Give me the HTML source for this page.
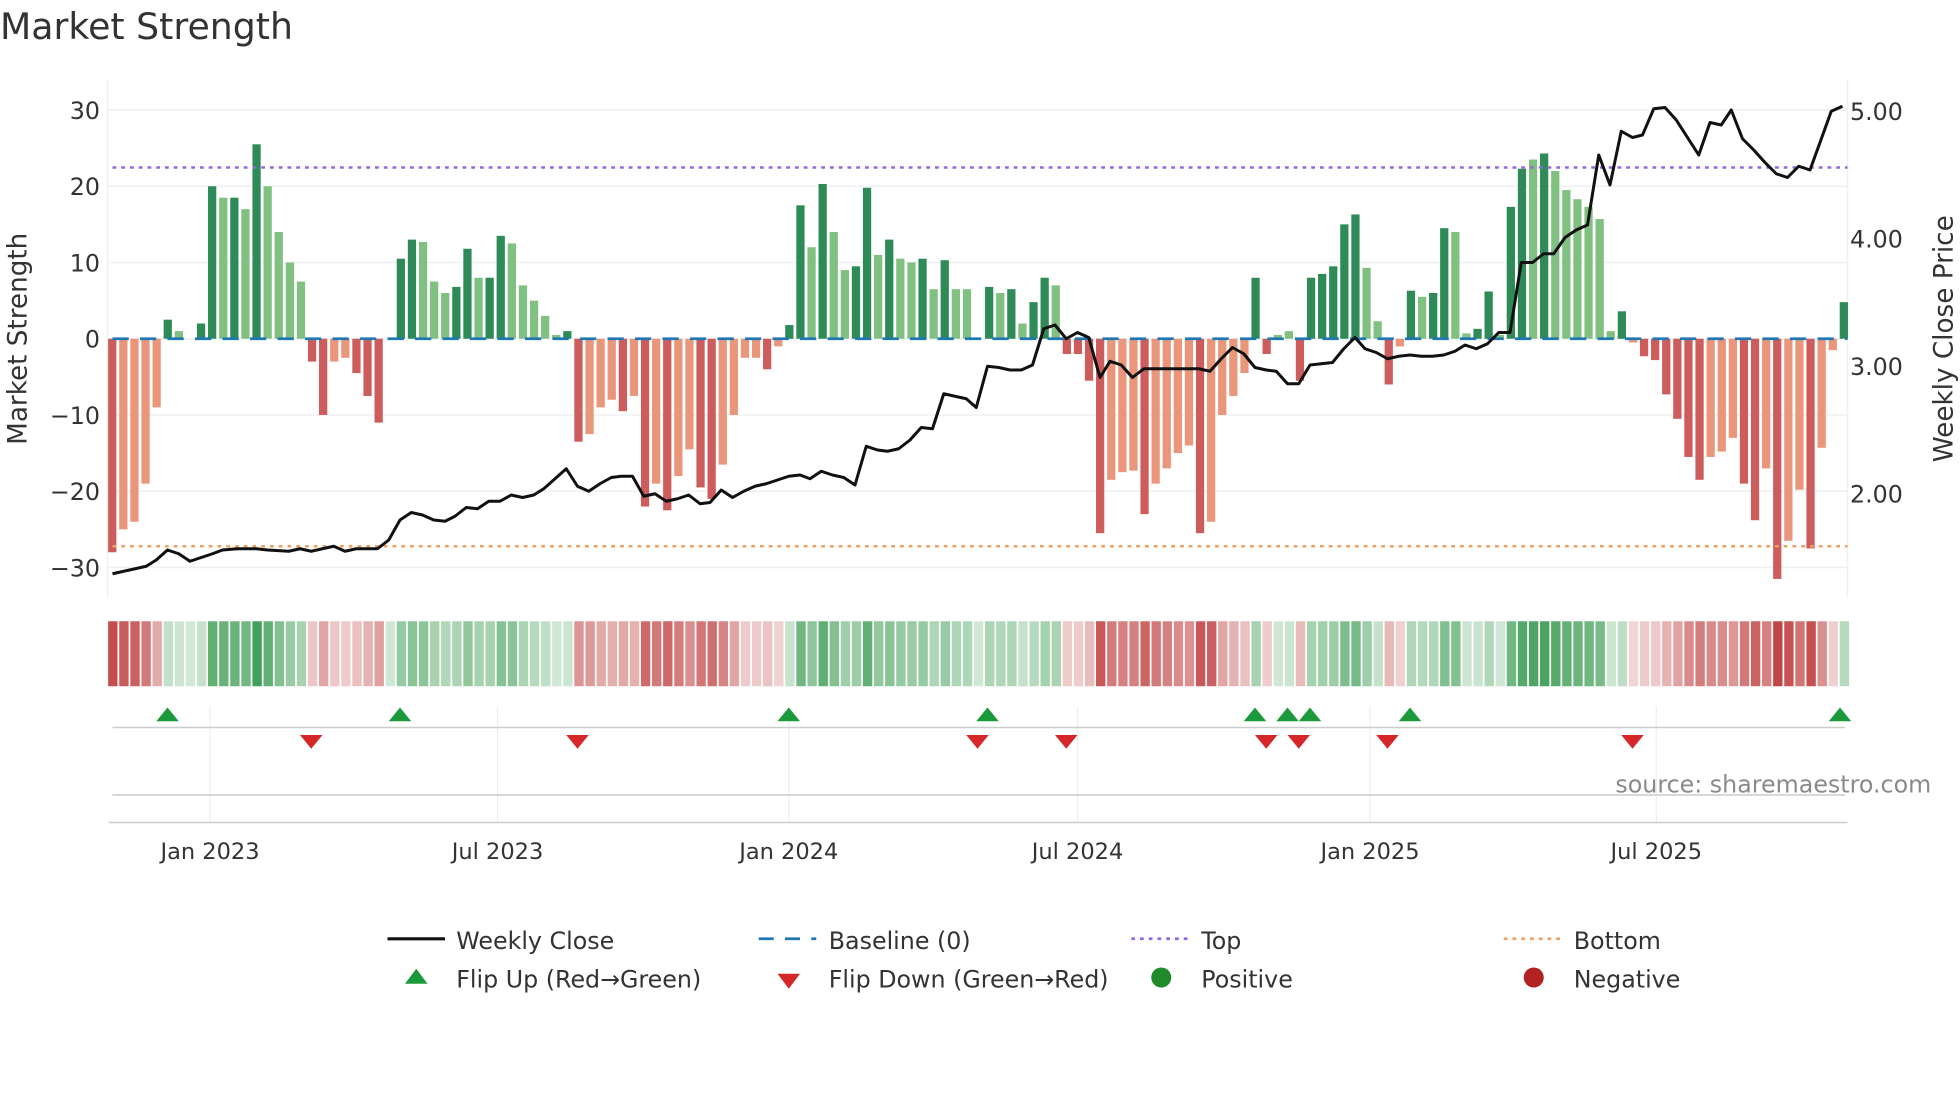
<!DOCTYPE html>
<html><head><meta charset="utf-8"><style>
html,body{margin:0;padding:0;background:#fff;}
svg{display:block;font-family:"DejaVu Sans","Liberation Sans",sans-serif;}
</style></head><body>
<svg id="s" width="1960" height="1102" viewBox="0 0 1568 881.6" xmlns="http://www.w3.org/2000/svg">
<rect width="1568" height="882" fill="#fff"/>
<text x="0" y="31" font-size="29" fill="#333">Market Strength</text>
<g id="grid"></g>
<g id="bars"></g>
<g id="strip"></g>
<g id="marks"></g>
<text transform="translate(21,271) rotate(-90)" text-anchor="middle" font-size="21" fill="#333">Market Strength</text>
<text transform="translate(1562,271) rotate(-90)" text-anchor="middle" font-size="21" fill="#333">Weekly Close Price</text>
<text x="1545" y="634" text-anchor="end" font-size="19" fill="#8a8a8a">source: sharemaestro.com</text>
<g font-size="18" fill="#333">
<text x="168" y="687" text-anchor="middle">Jan 2023</text>
<text x="398" y="687" text-anchor="middle">Jul 2023</text>
<text x="631" y="687" text-anchor="middle">Jan 2024</text>
<text x="862" y="687" text-anchor="middle">Jul 2024</text>
<text x="1096" y="687" text-anchor="middle">Jan 2025</text>
<text x="1325" y="687" text-anchor="middle">Jul 2025</text>
</g>
<g font-size="19" fill="#333">
<line x1="310" y1="751" x2="356" y2="751" stroke="#111" stroke-width="2.5"/>
<text x="365" y="759">Weekly Close</text>
<line x1="607" y1="751" x2="653" y2="751" stroke="#1f77b4" stroke-width="2.2" stroke-dasharray="12,9"/>
<text x="663" y="759">Baseline (0)</text>
<line x1="905" y1="751" x2="951" y2="751" stroke="#9467dd" stroke-width="2.2" stroke-dasharray="3,4"/>
<text x="961" y="759">Top</text>
<line x1="1203" y1="751" x2="1249" y2="751" stroke="#f0a060" stroke-width="2.2" stroke-dasharray="3,4"/>
<text x="1259" y="759">Bottom</text>
<polygon points="324,787 342,787 333,775" fill="#1a9a3a"/>
<text x="365" y="790">Flip Up (Red→Green)</text>
<polygon points="622,779 640,779 631,791" fill="#d62728"/>
<text x="663" y="790">Flip Down (Green→Red)</text>
<circle cx="929" cy="782" r="8" fill="#1e8a2a"/>
<text x="961" y="790">Positive</text>
<circle cx="1227" cy="782" r="8" fill="#b22222"/>
<text x="1259" y="790">Negative</text>
</g>
</svg>
<script>
var NS="http://www.w3.org/2000/svg";
function el(p,t,a){var e=document.createElementNS(NS,t);for(var k in a)e.setAttribute(k,a[k]);p.appendChild(e);return e;}
var g=document.getElementById('grid');
[30,20,10,0,-10,-20,-30].forEach(function(v){var y=271-v*6.1;
 el(g,'line',{x1:87,x2:1478,y1:y,y2:y,stroke:'#eef0f2','stroke-width':1.2});
 var t=el(g,'text',{x:80,y:y+7,'text-anchor':'end','font-size':19,fill:'#333'});t.textContent=(v<0?'\u2212'+(-v):v);
});
[[5,89],[4,191],[3,293],[2,395]].forEach(function(p){var t=el(g,'text',{x:1480,y:p[1]+7,'font-size':19,fill:'#333'});t.textContent=p[0].toFixed(2);});
el(g,'line',{x1:86,x2:86,y1:64,y2:478,stroke:'#eef0f2','stroke-width':1.2});
el(g,'line',{x1:1478,x2:1478,y1:64,y2:478,stroke:'#eef0f2','stroke-width':1.2});
[168,398,631,862,1096,1325].forEach(function(x){el(g,'line',{x1:x,x2:x,y1:565,y2:658,stroke:'#eceef0','stroke-width':1});});
el(g,'line',{x1:90,x2:1476,y1:582,y2:582,stroke:'#ccc','stroke-width':1.2});
el(g,'line',{x1:90,x2:1476,y1:636,y2:636,stroke:'#ccc','stroke-width':1.2});
el(g,'line',{x1:87,x2:1478,y1:658,y2:658,stroke:'#ccc','stroke-width':1.2});
var d=[[-28,1],[-25,0],[-24,0],[-19,0],[-9,0],[2.5,1],[1,0],[0,0],[2,1],[20,1],[18.5,0],[18.5,1],[17,0],[25.5,1],[20,0],[14,0],[10,0],[7.5,0],[-3,1],[-10,1],[-3,0],[-2.5,0],[-4.5,1],[-7.5,1],[-11,1],[0,0],
[10.5,1],[13,1],[12.7,0],[7.5,0],[6,0],[6.8,1],[11.8,1],[8,0],[8,1],[13.5,1],[12.5,0],[7,0],[5,0],[3,0],[0.5,0],[1,1],[-13.5,1],[-12.5,0],[-9,0],[-8,0],[-9.5,1],[-7.5,0],[-22,1],[-19,0],[-22.5,1],[-18,0],[-14.5,0],[-19.5,1],[-21,1],[-16.5,0],[-10,0],[-2.5,0],[-2.5,0],[-4,1],[-1,0],
[1.8,1],[17.5,1],[12,0],[20.3,1],[14,0],[9,0],[9.5,1],[19.8,1],[11,0],[13,1],[10.5,0],[10,0],[10.5,1],[6.5,0],[10.3,1],[6.5,0],[6.5,0],[0,0],[6.8,1],[6,0],[6.5,1],[2,0],[4.8,1],[8,1],[7,0],[-2,1],[-2,1],[-5.5,1],[-25.5,1],[-18.5,0],[-17.5,0],[-17.3,0],[-23,1],[-19,0],[-17,0],[-15,0],[-14,0],[-25.5,1],[-24,0],[-10,0],[-7.5,0],[-4.5,0],
[8,1],[-2,1],[0.5,0],[1,0],[-5.5,1],[8,1],[8.5,1],[9.5,1],[15,1],[16.3,1],[9.3,0],[2.3,0],[-6,1],[-1,0],[6.3,1],[5.5,0],[6,1],[14.5,1],[14,0],[0.7,0],[1.3,1],[6.2,1],[0.5,0],[17.3,1],[22.3,1],[23.5,0],[24.3,1],[22,0],[19.5,0],[18.3,0],[17.3,0],[15.7,0],[1,0],[3.6,1],[-0.5,0],
[-2.3,1],[-2.8,1],[-7.3,1],[-10.5,1],[-15.5,1],[-18.5,1],[-15.5,0],[-14.8,0],[-13,0],[-19,1],[-23.8,1],[-17,0],[-31.5,1],[-26.5,0],[-19.8,0],[-27.5,1],[-14.3,0],[-1.5,0],[4.8,1]];
var b=document.getElementById('bars'),st=document.getElementById('strip');
var W=8.88;
d.forEach(function(p,i){var x=86.5+i*W,v=p[0],h=Math.abs(v)*6.1;
 var c=v>=0?(p[1]?'#2e8b57':'#80c080'):(p[1]?'#cd5c5c':'#e9967a');
 if(h>0.3)el(b,'rect',{x:x,y:v>=0?271-h:271,width:6.6,height:h,fill:c});
 var a=Math.min(1,0.22+Math.abs(v)/30*0.8);
 var sc=v>=0?'rgba(46,150,70,'+a+')':'rgba(195,70,70,'+a+')';
 el(st,'rect',{x:x,y:497,width:7.5,height:52,fill:sc});
});
el(b,'line',{x1:90,x2:1478,y1:271,y2:271,stroke:'#1f77b4','stroke-width':2.2,'stroke-dasharray':'13,9'});
el(b,'line',{x1:90,x2:1478,y1:134,y2:134,stroke:'#9467dd','stroke-width':2,'stroke-dasharray':'3,4'});
el(b,'line',{x1:90,x2:1478,y1:437,y2:437,stroke:'#f0a060','stroke-width':2,'stroke-dasharray':'3,4'});
var pts="90,459 117,453 125,448 134,440 143,443 152,449 161,446 170,443 178,440 190,439 205,439 214,440 231,441 240,439 249,441 258,439 267,437 276,441 285,439 302,439 311,432 320,416 329,410 338,412 347,416 356,417 364,413 373,406 382,407 391,401 400,401 409,396 418,398 427,396 435,391 444,383 453,375 462,389 471,393 480,387 489,382 497,381 506,381 515,397 524,395 533,401 542,399 551,396 560,403 568,402 577,392 586,398 595,393 604,389 613,387 622,384 631,381 640,380 648,383 657,377 666,380 675,382 684,388 693,357 702,360 710,361 719,359 728,352 737,342 746,343 755,315 764,317 773,319 781,326 790,293 799,294 808,296 817,296 826,292 835,263 844,260 853,271 862,266 871,270 880,302 888,289 897,292 906,302 915,295 924,295 933,295 942,295 951,295 959,295 968,297 977,287 986,278 995,283 1004,294 1013,296 1021,297 1030,307 1039,307 1048,292 1057,291 1066,290 1075,279 1084,270 1092,279 1101,282 1110,287 1119,285 1128,284 1137,285 1146,285 1155,284 1164,281 1172,276 1181,279 1190,275 1199,266 1208,266 1217,210 1226,210 1235,203 1243,203 1252,190 1261,184 1270,180 1279,124 1288,148 1297,105 1306,110 1314,108 1323,87 1332,86 1341,96 1350,110 1359,124 1368,98 1377,100 1385,88 1394,111 1403,120 1412,130 1421,139 1430,142 1439,133 1448,136 1456,114 1465,89 1474,85";
el(b,'polyline',{points:pts,fill:'none',stroke:'#111','stroke-width':2.4,'stroke-linejoin':'round'});
var m=document.getElementById('marks');
[134,320,631,790,1004,1030,1048,1128,1472].forEach(function(x){el(m,'polygon',{points:(x-9)+',577 '+(x+9)+',577 '+x+',566',fill:'#1a9a3a'});});
[249,462,782,853,1013,1039,1110,1306].forEach(function(x){el(m,'polygon',{points:(x-9)+',588 '+(x+9)+',588 '+x+',599',fill:'#d62728'});});
</script>
</body></html>
